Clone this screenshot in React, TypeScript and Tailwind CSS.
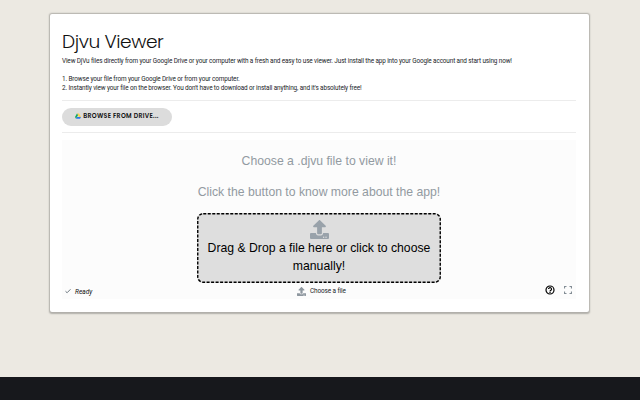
import React from "react";
import { FaUpload } from "react-icons/fa";

function DriveLogo() {
  return (
    <svg viewBox="0 0 24 21" className="h-[6px] w-[6px] shrink-0">
      <path d="M8 0h8l8 14h-8z" fill="#ffcf48" />
      <path d="M8 0l4 7-8 14-4-7z" fill="#11a861" />
      <path d="M8 14h16l-4 7H4z" fill="#2d75e8" />
    </svg>
  );
}

function StatusBar() {
  return (
    <div className="flex h-[16px] items-center font-['Roboto',sans-serif] text-[6.3px] leading-none text-[#212529]">
      <div className="flex w-[235px] items-center gap-[4px] pl-[3px]">
        <svg viewBox="0 0 12 12" className="h-[6px] w-[6px] text-[#6e7981]" fill="none" stroke="currentColor" strokeWidth="2">
          <path d="M1 6.5l3.2 3L11 2.5" />
        </svg>
        <span className="pt-[2px] text-[6.5px] text-[#111] italic">Ready</span>
      </div>
      <div className="flex flex-1 items-center gap-[4px]">
        <FaUpload className="h-[9px] w-[9px] text-[#8e979f]" />
        <span className="pt-px text-[6.4px] tracking-[-0.1px]">Choose a file</span>
      </div>
      <div className="flex items-center gap-[9px] pr-[4px] pb-[2px]">
        <svg viewBox="0 0 20 20" className="h-[10px] w-[10px] text-black" fill="none" stroke="currentColor" strokeWidth="2.4">
          <circle cx="10" cy="10" r="8" />
          <path d="M7 8.2a3 2.8 0 1 1 4.8 2.2C10.6 11.2 10 11.6 10 13M10 14v2" />
        </svg>
        <svg viewBox="0 0 16 16" className="h-[8px] w-[8px] text-[#838d95]" fill="none" stroke="currentColor" strokeWidth="2.4">
          <path d="M1 5V1h4M11 1h4v4M15 11v4h-4M5 15H1v-4" />
        </svg>
      </div>
    </div>
  );
}

export default function App() {
  return (
    <div className="flex h-[400px] w-[640px] flex-col justify-between overflow-hidden bg-[#ece9e2]">
      <main className="mt-[14px] ml-[50px] h-[298px] w-[539px] rounded-[2px] bg-white px-[12px] pt-[16px] font-['Roboto',sans-serif] text-[#212529] shadow-[0_0.5px_1.5px_1px_rgba(0,0,0,0.25)]">
        <h1 className="h-[26px] font-['Poppins','Inter',sans-serif] text-[18.6px] leading-[24px] font-light tracking-[-0.42px] whitespace-nowrap text-[#111]">
          Djvu Viewer
        </h1>
        <div className="h-[44px] pt-px text-[6.4px] leading-[9.2px] tracking-[-0.125px] whitespace-nowrap">
          <p>
            View DjVu files directly from your Google Drive or your computer with a fresh and easy to use viewer. Just install the app into your Google account and start using now!
          </p>
          <p className="mt-[9px]">1. Browse your file from your Google Drive or from your computer.</p>
          <p>2. Instantly view your file on the browser. You don't have to download or install anything, and it's absolutely free!</p>
        </div>
        <div className="flex h-[33px] w-[514px] items-center border-y border-[#ececec]">
          <button className="flex h-[18px] w-[110px] items-center justify-center gap-[2px] rounded-full bg-[#dcdcdc] pb-px font-['Poppins','Inter',sans-serif] text-[6.2px] font-semibold tracking-[0.3px] whitespace-nowrap text-[#111]">
            <DriveLogo />
            BROWSE FROM DRIVE...
          </button>
        </div>
        <section className="mt-[7px] flex h-[159px] w-[514px] flex-col bg-[#fcfcfc]">
          <div className="flex h-[143px] flex-col items-center font-['Liberation_Sans',sans-serif] text-[12.22px]">
            <p className="mt-[11px] leading-[20px] whitespace-nowrap text-[#929aa1]">Choose a .djvu file to view it!</p>
            <p className="mt-[11px] leading-[20px] whitespace-nowrap text-[#929aa1]">Click the button to know more about the app!</p>
            <div className="relative mt-[11px] flex h-[70px] w-[244px] shrink-0 flex-col items-center rounded-[6px] bg-[#dedede] pt-[7px] text-center leading-[18.5px] text-black">
              <svg className="absolute inset-0 h-full w-full" fill="none">
                <rect x="0.75" y="0.75" width="242.5" height="68.5" rx="5.5" stroke="black" strokeWidth="1.4" strokeDasharray="3 1.5" />
              </svg>
              <FaUpload className="h-[19px] w-[19px] shrink-0 text-[#99a2aa]" />
              <p className="leading-[18px] whitespace-nowrap">
                Drag &amp; Drop a file here or click to choose
                <br />
                manually!
              </p>
            </div>
          </div>
          <StatusBar />
        </section>
      </main>
      <footer className="h-[23px] bg-[#17181c]" />
    </div>
  );
}
